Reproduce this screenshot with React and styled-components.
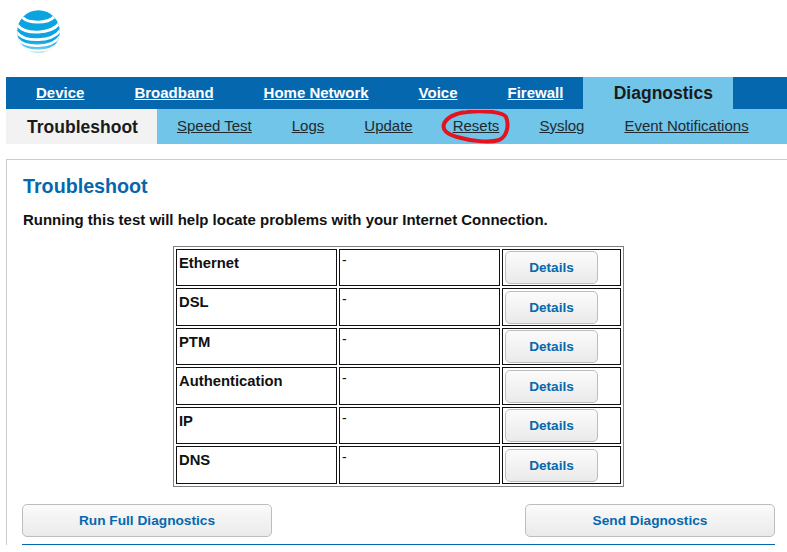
import React from 'react'
import styled, { createGlobalStyle } from 'styled-components'

const GlobalStyle = createGlobalStyle`
    html, body {
        margin: 0;
        padding: 0;
        height: 552px;
        overflow: hidden;
        background: #fff;
        font-family: "Liberation Sans", Arial, sans-serif;
    }
`

const topLinks = ['Device', 'Broadband', 'Home Network', 'Voice', 'Firewall']
const subLinks = ['Speed Test', 'Logs', 'Update', 'Resets', 'Syslog', 'Event Notifications']
const rows = ['Ethernet', 'DSL', 'PTM', 'Authentication', 'IP', 'DNS']

function Logo() {
    return (
        <svg width="43" height="43" viewBox="0 0 44 44">
            <defs>
                <clipPath id="globe">
                    <circle cx="22" cy="22" r="21.8" />
                </clipPath>
                <linearGradient id="fade" x1="0" y1="0" x2="0" y2="1">
                    <stop offset="0.72" stopColor="#0aa5df" />
                    <stop offset="1" stopColor="#9adbf2" />
                </linearGradient>
            </defs>
            <g clipPath="url(#globe)">
                <rect width="44" height="44" fill="url(#fade)" />
                <g fill="none" stroke="#fff" strokeLinecap="round">
                    <path d="M6 8 C12 14 31 14 38 7" strokeWidth="3" />
                    <path d="M0 15 C8 26 35 25 44 13" strokeWidth="3" />
                    <path d="M-1 22 C8 34 36 33 45 20" strokeWidth="2.8" />
                    <path d="M0 29 C8 40 36 39 44 27" strokeWidth="2.6" />
                    <path d="M3 35 C10 44 34 44 42 34" strokeWidth="2.4" />
                </g>
            </g>
        </svg>
    )
}

function App() {
    return (
        <Page>
            <GlobalStyle />
            <Header>
                <Logo />
            </Header>
            <TopNav>
                {topLinks.map((l) => <TopLink key={l} href="#">{l}</TopLink>)}
                <TopActive>Diagnostics</TopActive>
            </TopNav>
            <SubNav>
                <SubActive>Troubleshoot</SubActive>
                {subLinks.map((l) => (
                    <SubLink key={l} href="#">
                        {l}
                        {l === 'Resets' && (
                            <Scribble width="70" height="34" viewBox="0 0 70 34">
                                <path d="M26 2 C42 0 62 2 65 7 C68 14 67 26 58 30 C48 33 30 31 16 27 C6 24 1 20 3 14 C5 8 14 3 26 2 Z" />
                            </Scribble>
                        )}
                    </SubLink>
                ))}
            </SubNav>
            <Content>
                <Title>Troubleshoot</Title>
                <Description>Running this test will help locate problems with your Internet Connection.</Description>
                <Table>
                    <tbody>
                        {rows.map((r) => (
                            <Row key={r}>
                                <NameCell>{r}</NameCell>
                                <ValueCell>-</ValueCell>
                                <ActionCell><SmallButton>Details</SmallButton></ActionCell>
                            </Row>
                        ))}
                    </tbody>
                </Table>
                <Actions>
                    <WideButton>Run Full Diagnostics</WideButton>
                    <WideButton>Send Diagnostics</WideButton>
                </Actions>
                <Rule />
            </Content>
        </Page>
    )
}

export default App

const Page = styled.div`
    width: 787px;
    padding-left: 6px;
    box-sizing: border-box;
`

const Header = styled.div`
    height: 77px;
    padding: 10px 0 0 11px;
    box-sizing: border-box;
`

const TopNav = styled.div`
    display: flex;
    align-items: stretch;
    height: 32px;
    background: #0568ae;
    padding-left: 30px;
`

const TopLink = styled.a`
    flex: none;
    color: #fff;
    font-size: 15px;
    font-weight: bold;
    line-height: 32px;
    margin-right: 50px;
    white-space: nowrap;
    text-decoration: underline;

    &:nth-child(5) {
        margin-right: 20px;
    }
`

const TopActive = styled.div`
    flex: none;
    width: 150px;
    box-sizing: border-box;
    padding-left: 10px;
    text-align: center;
    background: #71c5e8;
    color: #1a1a1a;
    font-size: 17.5px;
    font-weight: bold;
    line-height: 32px;
`

const SubNav = styled.div`
    display: flex;
    align-items: stretch;
    height: 35px;
    background: #71c5e8;
`

const SubActive = styled.div`
    flex: none;
    width: 151px;
    box-sizing: border-box;
    padding-left: 2px;
    margin-right: 20px;
    text-align: center;
    background: #f2f2f2;
    color: #1a1a1a;
    font-size: 17.5px;
    font-weight: bold;
    line-height: 36px;
`

const SubLink = styled.a`
    flex: none;
    position: relative;
    color: #1f2a30;
    font-size: 15px;
    line-height: 34px;
    margin-right: 40px;
    white-space: nowrap;
    text-decoration: underline;
`

const Scribble = styled.svg`
    position: absolute;
    left: -12px;
    top: 1px;

    path {
        fill: none;
        stroke: #e3141f;
        stroke-width: 4;
    }
`

const Content = styled.div`
    margin-top: 15px;
    border-top: 1px solid #ccc;
    border-left: 1px solid #ccc;
    padding: 0 12px 0 15px;
`

const Title = styled.h1`
    margin: 14px 0 0 1px;
    color: #0568ae;
    font-size: 19.7px;
    font-weight: bold;
    line-height: 24px;
`

const Description = styled.p`
    margin: 12px 0 0 1px;
    color: #111;
    font-size: 14.98px;
    font-weight: bold;
    line-height: 20px;
`

const Table = styled.table`
    margin: 16px auto 0;
    border: 1px solid #808080;
    border-spacing: 2px;
    border-collapse: separate;
`

const Row = styled.tr`
    td {
        height: 37px;
    }

    &:nth-child(even) td {
        height: 38px;
    }
`

const Cell = styled.td`
    border: 1px solid #111;
    box-sizing: border-box;
    padding: 0;
    vertical-align: top;
`

const NameCell = styled(Cell)`
    width: 161px;
    padding: 4px 0 0 2px;
    color: #111;
    font-size: 14.8px;
    font-weight: bold;
    line-height: 18px;
`

const ValueCell = styled(Cell)`
    width: 161px;
    padding: 1px 0 0 2px;
    color: #111;
    font-size: 14px;
    line-height: 18px;
`

const ActionCell = styled(Cell)`
    width: 119px;
    padding: 1px 0 0 2px;

    tr:nth-child(even) & {
        padding-top: 2px;
    }
`

const ButtonBase = styled.button`
    display: block;
    box-sizing: border-box;
    border: 1px solid #bdbdbd;
    border-radius: 5px;
    background: linear-gradient(#fbfbfb, #eaeaea);
    color: #0568ae;
    font-family: inherit;
    font-weight: bold;
    padding: 0;
`

const SmallButton = styled(ButtonBase)`
    width: 93px;
    height: 33px;
    font-size: 13.6px;
`

const WideButton = styled(ButtonBase)`
    width: 250px;
    height: 33px;
    font-size: 13.7px;
`

const Actions = styled.div`
    display: flex;
    justify-content: space-between;
    width: 753px;
    margin-top: 17px;
`

const Rule = styled.div`
    width: 753px;
    height: 1px;
    margin-top: 7px;
    background: #0568ae;
`
